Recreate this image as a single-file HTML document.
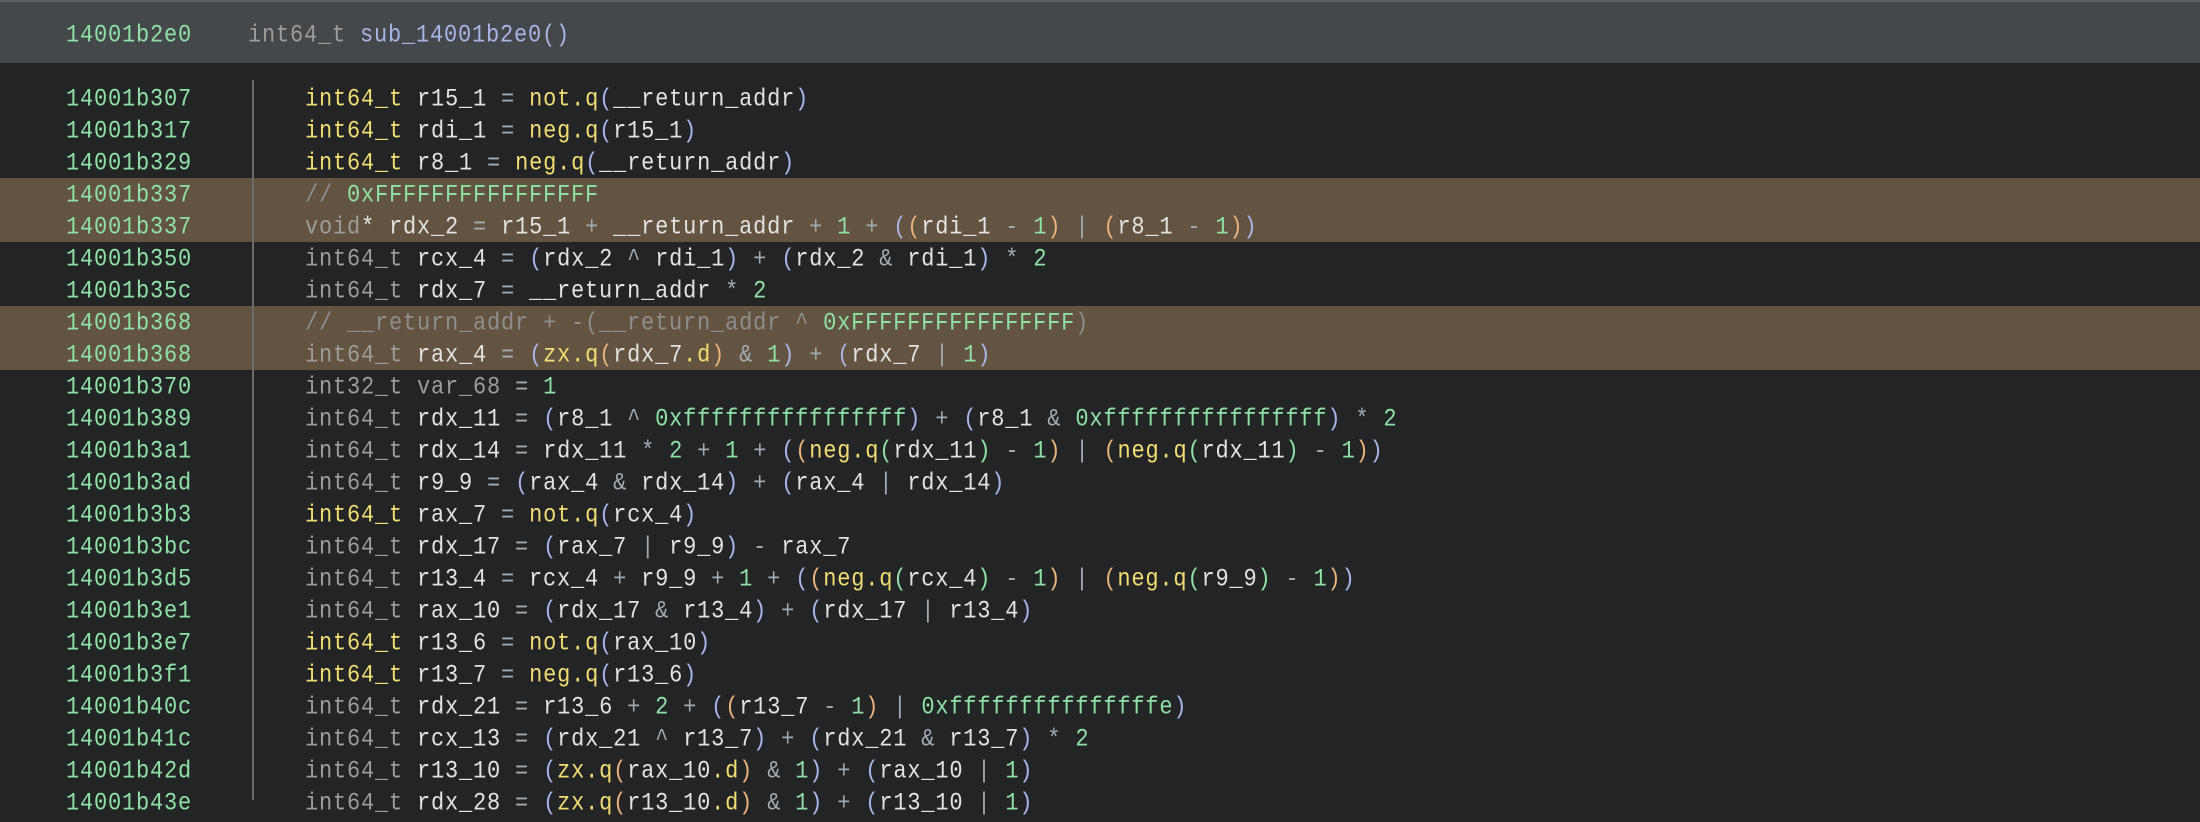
<!DOCTYPE html>
<html><head><meta charset="utf-8"><style>
html,body{margin:0;padding:0;}
body{width:2200px;height:800px;background:#222426;overflow:hidden;position:relative;
font-family:"Liberation Mono","DejaVu Sans Mono",monospace;font-size:22px;letter-spacing:0.8px;color:#e2e2e2;}
.hdr{position:absolute;left:0;top:0;width:2200px;height:63px;background:#45484a;border-top:2px solid #5c5f62;box-sizing:border-box;}
.row{position:absolute;left:0;width:2200px;height:32px;line-height:32px;white-space:pre;}
.hl{background:#635442;}
.a,.c,.h{display:inline-block;transform:scaleY(1.14);transform-origin:50% 55%;}
.a{position:absolute;left:66px;top:2px;color:#8fe0a6;}
.c{position:absolute;left:305px;top:2px;}
.h{position:absolute;left:248px;top:2px;}
.vl{position:absolute;left:252px;top:80px;width:2px;height:720px;background:#6a6c6e;}
.t{color:#9c9c9c}.y{color:#f1dd72}.g{color:#8fe0a6}.p1{color:#a9b4e6}.p2{color:#e8b27a}.p3{color:#8fe0a6}
.o{color:#a3aab0}.cm{color:#8e8e8e}.f{color:#a9b4e6}
</style></head><body>
<div class="hdr"></div>
<div class="row" style="top:18px"><span class="a">14001b2e0</span><span class="h"><span class="t">int64_t</span> <span class="f">sub_14001b2e0()</span></span></div>

<div class="row" style="top:82px"><span class="a">14001b307</span><span class="c"><span class="y">int64_t</span> r15_1 <span class="o">=</span> <span class="y">not.q</span><span class="p1">(</span>__return_addr<span class="p1">)</span></span></div>
<div class="row" style="top:114px"><span class="a">14001b317</span><span class="c"><span class="y">int64_t</span> rdi_1 <span class="o">=</span> <span class="y">neg.q</span><span class="p1">(</span>r15_1<span class="p1">)</span></span></div>
<div class="row" style="top:146px"><span class="a">14001b329</span><span class="c"><span class="y">int64_t</span> r8_1 <span class="o">=</span> <span class="y">neg.q</span><span class="p1">(</span>__return_addr<span class="p1">)</span></span></div>
<div class="row hl" style="top:178px"><span class="a">14001b337</span><span class="c"><span class="cm">// </span><span class="g">0xFFFFFFFFFFFFFFFF</span></span></div>
<div class="row hl" style="top:210px"><span class="a">14001b337</span><span class="c"><span class="t">void</span>* rdx_2 <span class="o">=</span> r15_1 <span class="o">+</span> __return_addr <span class="o">+</span> <span class="g">1</span> <span class="o">+</span> <span class="p1">(</span><span class="p2">(</span>rdi_1 <span class="o">-</span> <span class="g">1</span><span class="p2">)</span> <span class="o">|</span> <span class="p2">(</span>r8_1 <span class="o">-</span> <span class="g">1</span><span class="p2">)</span><span class="p1">)</span></span></div>
<div class="row" style="top:242px"><span class="a">14001b350</span><span class="c"><span class="t">int64_t</span> rcx_4 <span class="o">=</span> <span class="p1">(</span>rdx_2 <span class="o">^</span> rdi_1<span class="p1">)</span> <span class="o">+</span> <span class="p1">(</span>rdx_2 <span class="o">&amp;</span> rdi_1<span class="p1">)</span> <span class="o">*</span> <span class="g">2</span></span></div>
<div class="row" style="top:274px"><span class="a">14001b35c</span><span class="c"><span class="t">int64_t</span> rdx_7 <span class="o">=</span> __return_addr <span class="o">*</span> <span class="g">2</span></span></div>
<div class="row hl" style="top:306px"><span class="a">14001b368</span><span class="c"><span class="cm">// __return_addr + -(__return_addr ^ </span><span class="g">0xFFFFFFFFFFFFFFFF</span><span class="cm">)</span></span></div>
<div class="row hl" style="top:338px"><span class="a">14001b368</span><span class="c"><span class="t">int64_t</span> rax_4 <span class="o">=</span> <span class="p1">(</span><span class="y">zx.q</span><span class="p2">(</span>rdx_7<span class="y">.d</span><span class="p2">)</span> <span class="o">&amp;</span> <span class="g">1</span><span class="p1">)</span> <span class="o">+</span> <span class="p1">(</span>rdx_7 <span class="o">|</span> <span class="g">1</span><span class="p1">)</span></span></div>
<div class="row" style="top:370px"><span class="a">14001b370</span><span class="c"><span class="t">int32_t</span> <span class="t">var_68</span> <span class="o">=</span> <span class="g">1</span></span></div>
<div class="row" style="top:402px"><span class="a">14001b389</span><span class="c"><span class="t">int64_t</span> rdx_11 <span class="o">=</span> <span class="p1">(</span>r8_1 <span class="o">^</span> <span class="g">0xffffffffffffffff</span><span class="p1">)</span> <span class="o">+</span> <span class="p1">(</span>r8_1 <span class="o">&amp;</span> <span class="g">0xffffffffffffffff</span><span class="p1">)</span> <span class="o">*</span> <span class="g">2</span></span></div>
<div class="row" style="top:434px"><span class="a">14001b3a1</span><span class="c"><span class="t">int64_t</span> rdx_14 <span class="o">=</span> rdx_11 <span class="o">*</span> <span class="g">2</span> <span class="o">+</span> <span class="g">1</span> <span class="o">+</span> <span class="p1">(</span><span class="p2">(</span><span class="y">neg.q</span><span class="p3">(</span>rdx_11<span class="p3">)</span> <span class="o">-</span> <span class="g">1</span><span class="p2">)</span> <span class="o">|</span> <span class="p2">(</span><span class="y">neg.q</span><span class="p3">(</span>rdx_11<span class="p3">)</span> <span class="o">-</span> <span class="g">1</span><span class="p2">)</span><span class="p1">)</span></span></div>
<div class="row" style="top:466px"><span class="a">14001b3ad</span><span class="c"><span class="t">int64_t</span> r9_9 <span class="o">=</span> <span class="p1">(</span>rax_4 <span class="o">&amp;</span> rdx_14<span class="p1">)</span> <span class="o">+</span> <span class="p1">(</span>rax_4 <span class="o">|</span> rdx_14<span class="p1">)</span></span></div>
<div class="row" style="top:498px"><span class="a">14001b3b3</span><span class="c"><span class="y">int64_t</span> rax_7 <span class="o">=</span> <span class="y">not.q</span><span class="p1">(</span>rcx_4<span class="p1">)</span></span></div>
<div class="row" style="top:530px"><span class="a">14001b3bc</span><span class="c"><span class="t">int64_t</span> rdx_17 <span class="o">=</span> <span class="p1">(</span>rax_7 <span class="o">|</span> r9_9<span class="p1">)</span> <span class="o">-</span> rax_7</span></div>
<div class="row" style="top:562px"><span class="a">14001b3d5</span><span class="c"><span class="t">int64_t</span> r13_4 <span class="o">=</span> rcx_4 <span class="o">+</span> r9_9 <span class="o">+</span> <span class="g">1</span> <span class="o">+</span> <span class="p1">(</span><span class="p2">(</span><span class="y">neg.q</span><span class="p3">(</span>rcx_4<span class="p3">)</span> <span class="o">-</span> <span class="g">1</span><span class="p2">)</span> <span class="o">|</span> <span class="p2">(</span><span class="y">neg.q</span><span class="p3">(</span>r9_9<span class="p3">)</span> <span class="o">-</span> <span class="g">1</span><span class="p2">)</span><span class="p1">)</span></span></div>
<div class="row" style="top:594px"><span class="a">14001b3e1</span><span class="c"><span class="t">int64_t</span> rax_10 <span class="o">=</span> <span class="p1">(</span>rdx_17 <span class="o">&amp;</span> r13_4<span class="p1">)</span> <span class="o">+</span> <span class="p1">(</span>rdx_17 <span class="o">|</span> r13_4<span class="p1">)</span></span></div>
<div class="row" style="top:626px"><span class="a">14001b3e7</span><span class="c"><span class="y">int64_t</span> r13_6 <span class="o">=</span> <span class="y">not.q</span><span class="p1">(</span>rax_10<span class="p1">)</span></span></div>
<div class="row" style="top:658px"><span class="a">14001b3f1</span><span class="c"><span class="y">int64_t</span> r13_7 <span class="o">=</span> <span class="y">neg.q</span><span class="p1">(</span>r13_6<span class="p1">)</span></span></div>
<div class="row" style="top:690px"><span class="a">14001b40c</span><span class="c"><span class="t">int64_t</span> rdx_21 <span class="o">=</span> r13_6 <span class="o">+</span> <span class="g">2</span> <span class="o">+</span> <span class="p1">(</span><span class="p2">(</span>r13_7 <span class="o">-</span> <span class="g">1</span><span class="p2">)</span> <span class="o">|</span> <span class="g">0xfffffffffffffffe</span><span class="p1">)</span></span></div>
<div class="row" style="top:722px"><span class="a">14001b41c</span><span class="c"><span class="t">int64_t</span> rcx_13 <span class="o">=</span> <span class="p1">(</span>rdx_21 <span class="o">^</span> r13_7<span class="p1">)</span> <span class="o">+</span> <span class="p1">(</span>rdx_21 <span class="o">&amp;</span> r13_7<span class="p1">)</span> <span class="o">*</span> <span class="g">2</span></span></div>
<div class="row" style="top:754px"><span class="a">14001b42d</span><span class="c"><span class="t">int64_t</span> r13_10 <span class="o">=</span> <span class="p1">(</span><span class="y">zx.q</span><span class="p2">(</span>rax_10<span class="y">.d</span><span class="p2">)</span> <span class="o">&amp;</span> <span class="g">1</span><span class="p1">)</span> <span class="o">+</span> <span class="p1">(</span>rax_10 <span class="o">|</span> <span class="g">1</span><span class="p1">)</span></span></div>
<div class="row" style="top:786px"><span class="a">14001b43e</span><span class="c"><span class="t">int64_t</span> rdx_28 <span class="o">=</span> <span class="p1">(</span><span class="y">zx.q</span><span class="p2">(</span>r13_10<span class="y">.d</span><span class="p2">)</span> <span class="o">&amp;</span> <span class="g">1</span><span class="p1">)</span> <span class="o">+</span> <span class="p1">(</span>r13_10 <span class="o">|</span> <span class="g">1</span><span class="p1">)</span></span></div>
<div class="vl"></div>
</body></html>
